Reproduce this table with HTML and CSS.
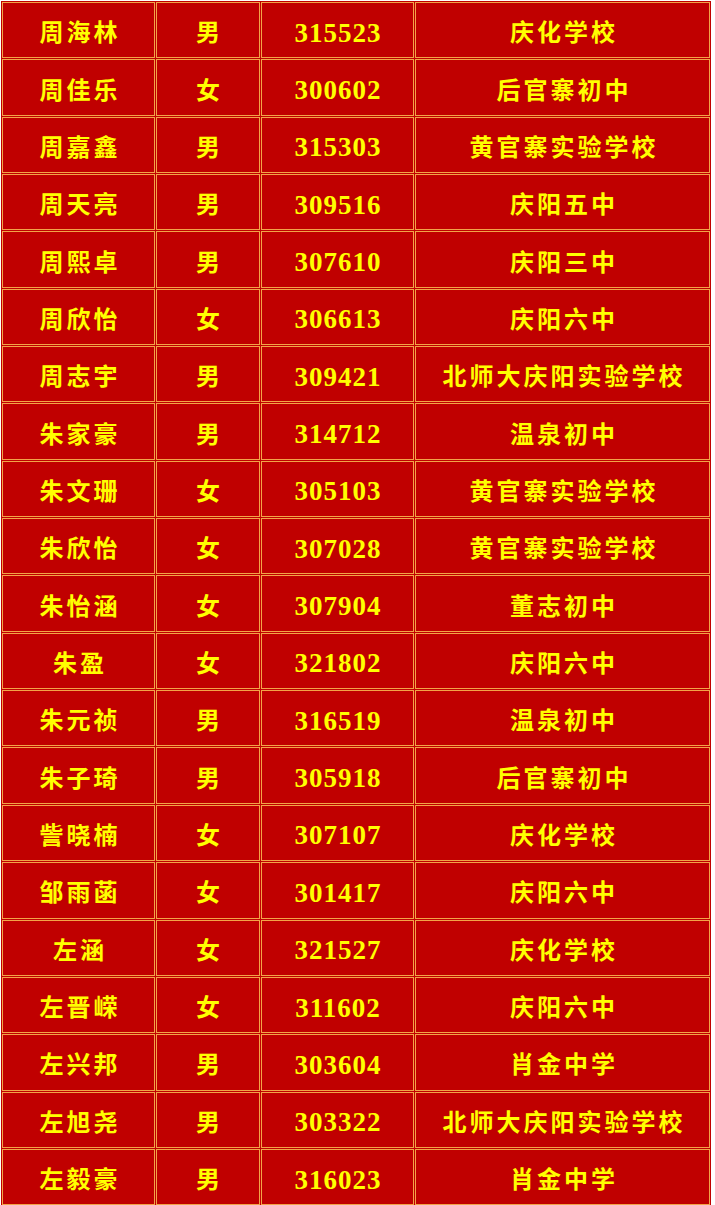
FILE: index.html
```html
<!DOCTYPE html>
<html lang="zh">
<head>
<meta charset="utf-8">
<link rel="stylesheet" href="styles.css">
</head>
<body>
<table class="roster">
<colgroup><col class="c-name"><col class="c-sex"><col class="c-id"><col class="c-school"></colgroup>
<tbody>
<tr><td>周海林</td><td>男</td><td class="num">315523</td><td>庆化学校</td></tr>
<tr><td>周佳乐</td><td>女</td><td class="num">300602</td><td>后官寨初中</td></tr>
<tr><td>周嘉鑫</td><td>男</td><td class="num">315303</td><td>黄官寨实验学校</td></tr>
<tr><td>周天亮</td><td>男</td><td class="num">309516</td><td>庆阳五中</td></tr>
<tr><td>周熙卓</td><td>男</td><td class="num">307610</td><td>庆阳三中</td></tr>
<tr><td>周欣怡</td><td>女</td><td class="num">306613</td><td>庆阳六中</td></tr>
<tr><td>周志宇</td><td>男</td><td class="num">309421</td><td>北师大庆阳实验学校</td></tr>
<tr><td>朱家豪</td><td>男</td><td class="num">314712</td><td>温泉初中</td></tr>
<tr><td>朱文珊</td><td>女</td><td class="num">305103</td><td>黄官寨实验学校</td></tr>
<tr><td>朱欣怡</td><td>女</td><td class="num">307028</td><td>黄官寨实验学校</td></tr>
<tr><td>朱怡涵</td><td>女</td><td class="num">307904</td><td>董志初中</td></tr>
<tr><td>朱盈</td><td>女</td><td class="num">321802</td><td>庆阳六中</td></tr>
<tr><td>朱元祯</td><td>男</td><td class="num">316519</td><td>温泉初中</td></tr>
<tr><td>朱子琦</td><td>男</td><td class="num">305918</td><td>后官寨初中</td></tr>
<tr><td>訾晓楠</td><td>女</td><td class="num">307107</td><td>庆化学校</td></tr>
<tr><td>邹雨菡</td><td>女</td><td class="num">301417</td><td>庆阳六中</td></tr>
<tr><td>左涵</td><td>女</td><td class="num">321527</td><td>庆化学校</td></tr>
<tr><td>左晋嵘</td><td>女</td><td class="num">311602</td><td>庆阳六中</td></tr>
<tr><td>左兴邦</td><td>男</td><td class="num">303604</td><td>肖金中学</td></tr>
<tr><td>左旭尧</td><td>男</td><td class="num">303322</td><td>北师大庆阳实验学校</td></tr>
<tr><td>左毅豪</td><td>男</td><td class="num">316023</td><td>肖金中学</td></tr>
</tbody>
</table>
</body>
</html>
```
FILE: styles.css
```css
html, body {
  margin: 0;
  padding: 0;
  background: #ffffff;
}
.roster {
  margin: 1px 0 0 1px;
  width: 710px;
  table-layout: fixed;
  border-collapse: separate;
  border-spacing: 1px;
  background: #c00000;
  font-family: "Noto Sans CJK SC", "Liberation Serif", serif;
  font-weight: 700;
  color: #ffff00;
}
.c-name { width: 153px; }
.c-sex { width: 104px; }
.c-id { width: 153px; }
.c-school { width: 295px; }
.roster td {
  box-sizing: border-box;
  height: 56.35px;
  padding: 2px 0 0;
  border: 1px solid #f2a448;
  background: #c00000;
  text-align: center;
  vertical-align: middle;
  font-size: 24px;
  letter-spacing: 3px;
  line-height: 1;
  text-indent: 3px;
}
.roster td.num {
  padding-top: 6px;
  font-family: "Liberation Serif", serif;
  font-size: 27px;
  letter-spacing: 1px;
  text-indent: 1px;
}
```
